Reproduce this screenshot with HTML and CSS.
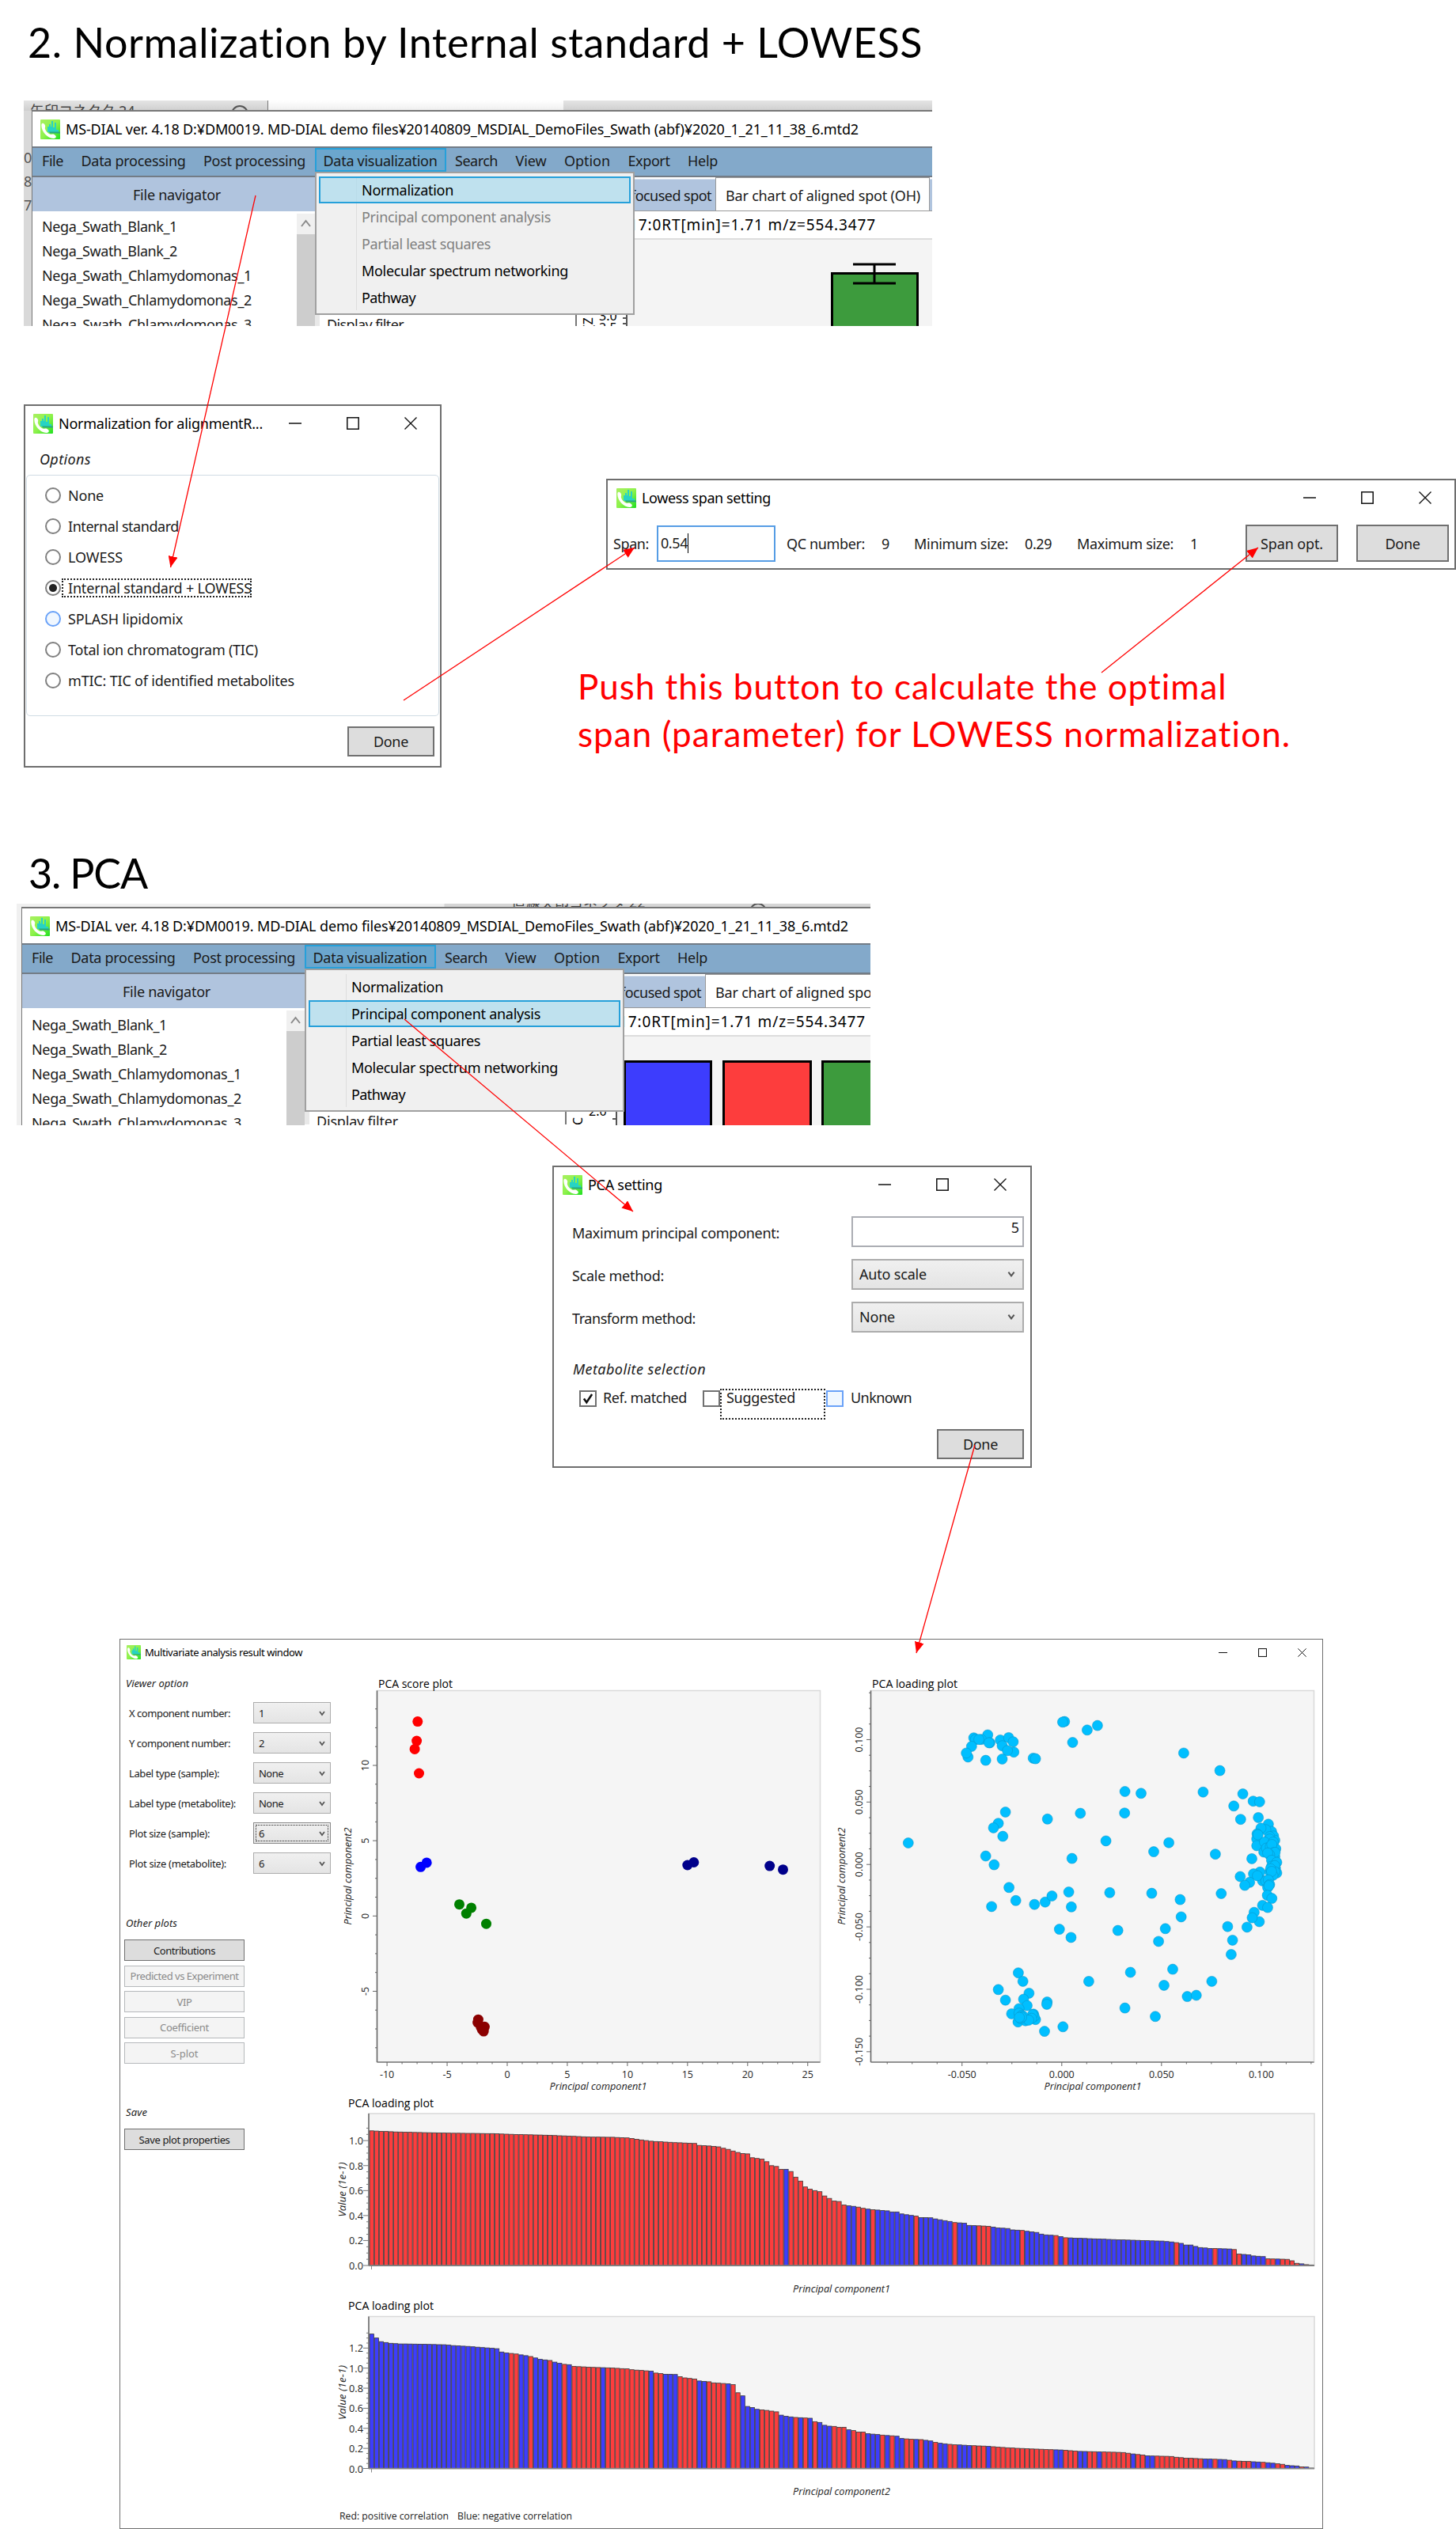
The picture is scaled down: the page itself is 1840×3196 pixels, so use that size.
FILE: index.html
```html
<!DOCTYPE html>
<html lang="en">
<head>
<meta charset="utf-8">
<title>MS-DIAL: normalization and PCA</title>
<link rel="stylesheet" href="styles.css">
</head>
<body>
<svg class="defs" aria-hidden="true">
  <defs>
    <linearGradient id="leaf" x1="0" y1="0" x2="1" y2="1"><stop offset="0" stop-color="#a8f060"/><stop offset=".5" stop-color="#8ff24c"/><stop offset="1" stop-color="#1fe01f"/></linearGradient>
    <symbol id="logo" viewBox="0 0 25 25">
      <rect width="25" height="25" rx="1" fill="url(#leaf)"/>
      <path d="M9 15V9h2v-3h2V9h1V2h2v8h2V4h2v9h3v3H9z" fill="#27d3c4"/>
      <path d="M11 15.500h14v2H12z" fill="#2aa77c"/>
      <path d="M1.500 6C2 4 5 4 6 7.500c.6 2-.6 2.800 0 4.500 1 3 3.500 5.500 6 6.500 2 .8 3-.8 5.500.5 3 1.600 3 4 .5 4.800C10 25.500 0 14.500 1.500 6z" fill="#fff"/>
    </symbol>
    <symbol id="min" viewBox="0 0 16 16"><path d="M0 8h16" stroke="#111" stroke-width="1.500"/></symbol>
    <symbol id="max" viewBox="0 0 16 16"><rect x=".8" y=".8" width="14.400" height="14.400" fill="none" stroke="#111" stroke-width="1.500"/></symbol>
    <symbol id="close" viewBox="0 0 16 16"><path d="M.5.5l15 15M15.500.5l-15 15" stroke="#111" stroke-width="1.400"/></symbol>
    <symbol id="chev" viewBox="0 0 10 10"><path d="M2 3l3 4 3-4" fill="none" stroke="#555" stroke-width="1.700"/></symbol>
    <marker id="head" viewBox="0 0 14 12" refX="14" refY="6" markerWidth="14" markerHeight="12" markerUnits="userSpaceOnUse" orient="auto"><path d="M0 0L14 6 0 12z" fill="#f00"/></marker>
  </defs>
</svg>

<main class="slide">
  <h1 class="heading heading-norm"><span data-w="1132">2. Normalization by Internal standard + LOWESS</span></h1>

  <section class="shot shot-norm">
    <div class="strip"><span class="strip-text strip-jp">矢印コネクタ 24</span><i class="pane"></i><svg class="eye" viewBox="0 0 24 24"><circle cx="12" cy="12" r="10"/><circle cx="12" cy="12" r="4"/></svg></div>
    <div class="edge"><span>0</span><span>8</span><span>7</span></div>
    <div class="app">
      <header class="app-title"><svg class="icon"><use href="#logo"/></svg><span data-w="1002">MS-DIAL ver. 4.18 D:¥DM0019. MD-DIAL demo files¥20140809_MSDIAL_DemoFiles_Swath (abf)¥2020_1_21_11_38_6.mtd2</span></header>
      <nav class="menubar"><span data-w="27">File</span><span data-w="132">Data processing</span><span data-w="129">Post processing</span><b class="open"><span data-w="144">Data visualization</span></b><span data-w="54">Search</span><span data-w="39">View</span><span data-w="58">Option</span><span data-w="53">Export</span><span data-w="38">Help</span></nav>
      <div class="app-body">
        <div class="navigator">
          <div class="nav-head"><span data-w="111">File navigator</span></div>
          <div class="nav-list">
            <ul><li><span data-w="171">Nega_Swath_Blank_1</span></li><li><span data-w="171">Nega_Swath_Blank_2</span></li><li><span data-w="265">Nega_Swath_Chlamydomonas_1</span></li><li><span data-w="265">Nega_Swath_Chlamydomonas_2</span></li><li><span data-w="265">Nega_Swath_Chlamydomonas_3</span></li></ul>
            <div class="scroll"><svg viewBox="0 0 23 26"><path d="M6 16l5.500-7 5.500 7" fill="none" stroke="#8a8a8a" stroke-width="2"/></svg></div>
          </div>
        </div>
        <div class="filter"><span data-w="97">Display filter</span></div>
        <div class="view">
          <div class="tabs"><span class="tab"><span data-w="102">focused spot</span></span><span class="tab active"><span data-w="246">Bar chart of aligned spot (OH)</span></span></div>
          <div class="info"><span data-w="312">17:0RT[min]=1.71 m/z=554.3477</span></div>
          <svg class="mini" viewBox="0 0 450 110">
            <rect x="63" width="387" height="110" fill="#f4f4f4"/>
            <path d="M63 80v30M58 92h5M58 99h5M58 106h5" stroke="#555" stroke-width="2"/>
            <text x="28" y="102">3.0</text><text x="28" y="117">2.5</text><text transform="translate(20 112) rotate(-90)">(Z</text>
            <path d="M322.500 112V42.500h108V112" fill="#3d9b3d" stroke="#000" stroke-width="3"/>
            <path d="M349 31h54M349 55h54M376 31v24" stroke="#000" stroke-width="3"/>
          </svg>
        </div>
      </div>
      <div class="popup"><span class="item hot"><span data-w="116">Normalization</span></span><span class="item off"><span data-w="239">Principal component analysis</span></span><span class="item off"><span data-w="163">Partial least squares</span></span><span class="item"><span data-w="261">Molecular spectrum networking</span></span><span class="item"><span data-w="68">Pathway</span></span></div>
    </div>
  </section>

  <section class="window win-norm">
    <header class="titlebar"><svg class="icon"><use href="#logo"/></svg><span data-w="258">Normalization for alignmentR...</span><svg class="ctl"><use href="#min"/></svg><svg class="ctl"><use href="#max"/></svg><svg class="ctl"><use href="#close"/></svg></header>
    <h2 class="legend"><span data-w="65">Options</span></h2>
    <div class="group">
      <label class="radio"><i></i><span data-w="45">None</span></label>
      <label class="radio"><i></i><span data-w="140">Internal standard</span></label>
      <label class="radio"><i></i><span data-w="69">LOWESS</span></label>
      <label class="radio checked"><i></i><b><span data-w="232">Internal standard + LOWESS</span></b></label>
      <label class="radio hover"><i></i><span data-w="145">SPLASH lipidomix</span></label>
      <label class="radio"><i></i><span data-w="240">Total ion chromatogram (TIC)</span></label>
      <label class="radio"><i></i><span data-w="286">mTIC: TIC of identified metabolites</span></label>
    </div>
    <div class="actions"><button class="btn"><span data-w="44">Done</span></button></div>
  </section>

  <section class="window win-span">
    <header class="titlebar"><svg class="icon"><use href="#logo"/></svg><span data-w="163">Lowess span setting</span><svg class="ctl"><use href="#min"/></svg><svg class="ctl"><use href="#max"/></svg><svg class="ctl"><use href="#close"/></svg></header>
    <div class="span-row">
      <span class="c1" data-w="45">Span:</span><span class="input"><span data-w="34">0.54</span></span><span class="c2" data-w="99">QC number:</span><span class="c3">9</span><span class="c4" data-w="119">Minimum size:</span><span class="c5" data-w="34">0.29</span><span class="c6" data-w="122">Maximum size:</span><span class="c7">1</span>
      <button class="btn b1"><span data-w="79">Span opt.</span></button><button class="btn b2"><span data-w="44">Done</span></button>
    </div>
  </section>

  <p class="note"><span data-w="820">Push this button to calculate the optimal</span><br><span data-w="902">span (parameter) for LOWESS normalization.</span></p>

  <h1 class="heading heading-pca"><span data-w="150">3. PCA</span></h1>

  <section class="shot shot-pca">
    <div class="strip"><span class="strip-text strip-jp">直線矢印コネクタ 22</span><svg class="eye" viewBox="0 0 24 24"><circle cx="12" cy="12" r="10"/><circle cx="12" cy="12" r="4"/></svg></div>
    <div class="app">
      <header class="app-title"><svg class="icon"><use href="#logo"/></svg><span data-w="1002">MS-DIAL ver. 4.18 D:¥DM0019. MD-DIAL demo files¥20140809_MSDIAL_DemoFiles_Swath (abf)¥2020_1_21_11_38_6.mtd2</span></header>
      <nav class="menubar"><span data-w="27">File</span><span data-w="132">Data processing</span><span data-w="129">Post processing</span><b class="open"><span data-w="144">Data visualization</span></b><span data-w="54">Search</span><span data-w="39">View</span><span data-w="58">Option</span><span data-w="53">Export</span><span data-w="38">Help</span></nav>
      <div class="app-body">
        <div class="navigator">
          <div class="nav-head"><span data-w="111">File navigator</span></div>
          <div class="nav-list">
            <ul><li><span data-w="171">Nega_Swath_Blank_1</span></li><li><span data-w="171">Nega_Swath_Blank_2</span></li><li><span data-w="265">Nega_Swath_Chlamydomonas_1</span></li><li><span data-w="265">Nega_Swath_Chlamydomonas_2</span></li><li><span data-w="265">Nega_Swath_Chlamydomonas_3</span></li></ul>
            <div class="scroll"><svg viewBox="0 0 23 26"><path d="M6 16l5.500-7 5.500 7" fill="none" stroke="#8a8a8a" stroke-width="2"/></svg></div>
          </div>
        </div>
        <div class="filter"><span data-w="103">Display filter</span></div>
        <div class="view">
          <div class="tabs"><span class="tab"><span data-w="102">focused spot</span></span><span class="tab active"><span data-w="246">Bar chart of aligned spot (OH)</span></span></div>
          <div class="info"><span data-w="312">17:0RT[min]=1.71 m/z=554.3477</span></div>
          <svg class="mini" viewBox="0 0 450 110">
            <rect x="63" width="387" height="120" fill="#f4f4f4"/>
            <path d="M63 80v40M58 92h5M58 104h5" stroke="#555" stroke-width="2"/>
            <text x="28" y="100">2.0</text><text transform="translate(20 122) rotate(-90)">RC</text>
            <path d="M73.500 120V31.500h109V120" fill="#3d3dfd" stroke="#000" stroke-width="3"/>
            <path d="M198.500 120V31.500h110V120" fill="#fd3d3d" stroke="#000" stroke-width="3"/>
            <path d="M323.500 120V31.500h110V120" fill="#3d9b3d" stroke="#000" stroke-width="3"/>
          </svg>
        </div>
      </div>
      <div class="popup"><span class="item"><span data-w="116">Normalization</span></span><span class="item hot"><span data-w="239">Principal component analysis</span></span><span class="item"><span data-w="163">Partial least squares</span></span><span class="item"><span data-w="261">Molecular spectrum networking</span></span><span class="item"><span data-w="68">Pathway</span></span></div>
    </div>
  </section>

  <section class="window win-pca">
    <header class="titlebar"><svg class="icon"><use href="#logo"/></svg><span data-w="94">PCA setting</span><svg class="ctl"><use href="#min"/></svg><svg class="ctl"><use href="#max"/></svg><svg class="ctl"><use href="#close"/></svg></header>
    <div class="form">
      <div class="field"><span data-w="262">Maximum principal component:</span><span class="input num">5</span></div>
      <div class="field"><span data-w="116">Scale method:</span><span class="combo"><span data-w="85">Auto scale</span><svg><use href="#chev"/></svg></span></div>
      <div class="field"><span data-w="156">Transform method:</span><span class="combo"><span data-w="45">None</span><svg><use href="#chev"/></svg></span></div>
    </div>
    <h2 class="legend"><span data-w="168">Metabolite selection</span></h2>
    <div class="checks">
      <i class="box"><svg viewBox="0 0 20 20"><path d="M4 10l4 5.500 8-12" fill="none" stroke="#111" stroke-width="3"/></svg></i><span class="k1" data-w="106">Ref. matched</span>
      <i class="box"></i><span class="focus"><span data-w="87">Suggested</span></span><i class="box hover"></i><span class="k3" data-w="77">Unknown</span>
    </div>
    <div class="actions"><button class="btn"><span data-w="44">Done</span></button></div>
  </section>

  <section class="window win-result">
    <header class="titlebar"><svg class="icon"><use href="#logo"/></svg><span data-w="199">Multivariate analysis result window</span><svg class="ctl"><use href="#min"/></svg><svg class="ctl"><use href="#max"/></svg><svg class="ctl"><use href="#close"/></svg></header>
    <div class="result">
      <aside class="options">
        <h2><span data-w="79">Viewer option</span></h2>
        <div class="fields">
          <div class="field"><span data-w="128">X component number:</span><span class="combo">1<svg><use href="#chev"/></svg></span></div>
          <div class="field"><span data-w="128">Y component number:</span><span class="combo">2<svg><use href="#chev"/></svg></span></div>
          <div class="field"><span data-w="114">Label type (sample):</span><span class="combo"><span data-w="31">None</span><svg><use href="#chev"/></svg></span></div>
          <div class="field"><span data-w="135">Label type (metabolite):</span><span class="combo"><span data-w="31">None</span><svg><use href="#chev"/></svg></span></div>
          <div class="field"><span data-w="102">Plot size (sample):</span><span class="combo dotted">6<svg><use href="#chev"/></svg></span></div>
          <div class="field"><span data-w="123">Plot size (metabolite):</span><span class="combo">6<svg><use href="#chev"/></svg></span></div>
        </div>
        <h2 class="h-plots"><span data-w="65">Other plots</span></h2>
        <div class="stack">
          <button class="btn"><span data-w="78">Contributions</span></button>
          <button class="btn" disabled><span data-w="137">Predicted vs Experiment</span></button>
          <button class="btn" disabled><span data-w="19">VIP</span></button>
          <button class="btn" disabled><span data-w="62">Coefficient</span></button>
          <button class="btn" disabled><span data-w="35">S-plot</span></button>
        </div>
        <h2 class="h-save"><span data-w="27">Save</span></h2>
        <button class="btn"><span data-w="115">Save plot properties</span></button>
      </aside>
      <svg class="charts" id="charts" viewBox="420 2108 1250 1084"></svg>
    </div>
  </section>

  <svg class="arrows" viewBox="0 0 1840 3196">
    <g stroke="#f00" stroke-width="1.300">
      <path d="M323 247L215.500 717" marker-end="url(#head)"/>
      <path d="M510 885L802 692" marker-end="url(#head)"/>
      <path d="M1392 850L1590 692" marker-end="url(#head)"/>
      <path d="M511 1288L800 1531" marker-end="url(#head)"/>
      <path d="M1232 1826L1158 2089" marker-end="url(#head)"/>
    </g>
  </svg>
</main>
<script src="charts.js"></script>
</body>
</html>
```
FILE: styles.css
```css
* { box-sizing: border-box; }
body { margin: 0; background: #fff; color: #1a1a1a; font: 18px/20px "Noto Sans", "Open Sans", "Noto Sans CJK JP", sans-serif; }
h1, h2, p, ul { margin: 0; padding: 0; font-weight: 400; }
li { list-style: none; }
b { font-weight: 400; }
i { font-style: normal; }
[data-w] { display: inline-block; white-space: pre; flex: none; }
.defs { position: absolute; width: 0; height: 0; }
.slide { position: relative; width: 1840px; height: 3196px; overflow: hidden; }

.heading { position: absolute; font: 52px/64px Lato, sans-serif; color: #000; white-space: nowrap; }
.heading-norm { left: 35px; top: 21px; }
.heading-pca { left: 36px; top: 1071px; }
.note { position: absolute; left: 730px; top: 837px; font: 44px/60px Lato, sans-serif; color: #f00; white-space: nowrap; }
.arrows { position: absolute; left: 0; top: 0; width: 1840px; height: 3196px; fill: none; }

/* main application captures */
.shot { position: absolute; overflow: hidden; background: #d9d9d9; }
.shot-norm { left: 30px; top: 127px; width: 1148px; height: 285px; padding: 12px 0 0 10px; }
.shot-pca { left: 21px; top: 1142px; width: 1079px; height: 280px; padding: 4px 0 0 6px; background: #f0f0f0; }
.shot-pca .app { height: 276px; }
.strip { position: absolute; left: 0; top: 0; width: 100%; height: 13px; overflow: hidden; background: linear-gradient(#e4e4e4, #cfcfcf); }
.shot-pca .strip { background: linear-gradient(90deg, #f0f0f0 540px, #d6d6d6 541px); }
.strip-jp { position: absolute; left: 8px; top: 3px; letter-spacing: 0; color: #444; white-space: nowrap; }
.shot-pca .strip-jp { left: 626px; top: -12px; }
.pane { position: absolute; left: 308px; top: 0; width: 374px; height: 13px; background: linear-gradient(#fff, #eee); border-left: 1px solid #777; }
.eye { position: absolute; left: 261px; top: 5px; width: 24px; height: 24px; fill: none; stroke: #555; stroke-width: 2; }
.shot-pca .eye { left: 925px; top: -2px; }
.edge { position: absolute; left: 0; top: 62px; display: flex; flex-direction: column; gap: 10px; color: #555; }
.app { position: relative; width: 1150px; height: 273px; background: #fff; border-top: 2px solid #777; border-left: 1px solid #777; overflow: hidden; }
.icon { width: 25px; height: 25px; flex: none; }
.app-title { display: flex; align-items: center; gap: 7px; height: 44px; padding: 0 0 0 10px; color: #000; }
.menubar { display: flex; align-items: flex-start; gap: 22.500px; height: 39px; padding-left: 12px; background: #83a9ca; border-top: 2px solid #737c86; border-bottom: 2px solid #737c86; line-height: 32px; }
.menubar .open { height: 30px; margin: 0 -11px; padding: 0 9px; background: #6ba6cd; border: 2px solid #26a0da; line-height: 28px; }
.app-body { display: flex; height: 190px; }
.navigator { width: 357px; flex: none; }
.nav-head { height: 43px; background: #b0c4de; text-align: center; line-height: 44px; padding-left: 8px; }
.nav-list { display: flex; justify-content: space-between; padding: 3px 0 0 12px; }
.nav-list ul { padding-top: 1px; }
.shot-pca .nav-list ul { padding-top: 3px; }
.nav-list li { height: 31px; line-height: 30px; }
.scroll { width: 23px; height: 150px; background: #cdcdcd; }
.scroll svg { display: block; width: 23px; height: 26px; background: #f0f0f0; }
.filter { width: 331px; flex: none; border-left: 6px solid #e8e8e8; border-right: 2px solid #777; padding: 176px 0 0 9px; }
.view { width: 450px; flex: none; }
.tabs { display: flex; height: 43px; border-bottom: 1px solid #999; background: linear-gradient(#fff 2px, #b0c4de 3px); }
.tab { width: 175px; padding-right: 5px; text-align: right; line-height: 46px; }
.tab.active { width: 271px; padding: 0 0 0 12px; text-align: left; line-height: 44px; background: #fff; border: 1px solid #999; border-bottom: 0; }
.info { height: 36px; padding-left: 66px; font-size: 19px; line-height: 34px; color: #000; border-bottom: 2px solid #ddd; }
.mini { display: block; width: 450px; height: 110px; overflow: visible; font-size: 16px; }
.popup { position: absolute; left: 357px; top: 76px; width: 404px; height: 181px; padding: 4px 3px; display: flex; flex-direction: column; background: linear-gradient(#ddd, #ddd) 50px 5px / 1px 168px no-repeat #f0f0f0; border: 2px solid #a0a0a0; color: #000; }
.item { height: 34.300px; padding-left: 52px; border: 2px solid transparent; line-height: 30px; }
.item.hot { background: rgba(170, 218, 236, .7); border-color: #26a0da; }
.item.off { color: #808080; }

/* dialogs */
.window { position: absolute; background: #fff; border: 2px solid #6e6e6e; }
.titlebar { display: flex; align-items: center; gap: 7px; color: #000; }
.titlebar span { margin-right: auto; }
.ctl { width: 16px; height: 16px; flex: none; margin-left: 50px; }
.btn { display: block; margin: 0; padding: 0; font: inherit; color: #1a1a1a; background: #ddd; border: 2px solid #707070; border-radius: 0; text-align: center; }
.btn:disabled { background: #f4f4f4; border-color: #b5b8bb; color: #8a8a8a; }
.legend { font-size: 18px; font-style: italic; }
.actions { display: flex; justify-content: flex-end; }
.input { background: #fff; border: 2px solid #abadb3; }
.combo { display: flex; align-items: center; justify-content: space-between; background: linear-gradient(#f0f0f0, #e4e4e4); border: 2px solid #acacac; }

.win-norm { left: 30px; top: 511px; width: 528px; height: 459px; }
.win-norm .titlebar { height: 44px; padding: 0 29px 0 10px; }
.titlebar span + .ctl { margin-left: 0; }
.win-norm .legend { padding: 13px 0 0 18px; height: 43px; }
.group { height: 305px; margin: 0 1px; padding: 5px 0 0 22px; border: 1px solid #d0dce4; border-radius: 5px; }
.radio { display: flex; align-items: center; height: 39px; gap: 9px; }
.radio i { width: 20px; height: 20px; margin-left: 1px; border: 2px solid #808080; border-radius: 50%; }
.radio b { margin-left: -8px; padding-left: 6px; border: 2px dotted #222; height: 24px; line-height: 20px; }
.radio b span { margin-right: -2px; }
.radio.checked i { background: radial-gradient(circle, #222 4.500px, #fff 5.500px); }
.radio.hover i { border-color: #6aa2f8; background: #f0f7ff; }
.win-norm .actions { padding: 13px 7px 0 0; }
.win-norm .btn, .win-pca .btn { width: 110px; height: 38px; }

.win-span { left: 766px; top: 605px; width: 1074px; height: 115px; }
.win-span .titlebar { height: 44px; padding: 0 29px 0 11px; }
.span-row { display: flex; align-items: center; height: 66px; padding: 7px 0 2px 7px; }
.span-row > span { padding-top: 1px; }
.span-row .input { width: 150px; height: 46px; margin: 0 14px 0 10px; padding: 0 0 0 3px; border-color: #569de5; line-height: 40px; }
.span-row .input span { border-right: 1px solid #000; height: 25px; line-height: 25px; }
.c3 { margin: 0 31px 0 21px; width: 10px; }
.c5 { margin: 0 32px 0 21px; }
.c7 { margin: 0 60px 0 21px; width: 10px; }
.span-row .btn { width: 117px; height: 47px; flex: none; }
.span-row .b1 { margin-right: 23px; }

.win-pca { left: 698px; top: 1473px; width: 606px; height: 382px; }
.win-pca .titlebar { height: 44px; padding: 0 30px 0 11px; }
.form { padding: 18px 8px 0 23px; display: flex; flex-direction: column; gap: 15px; }
.form .field { display: flex; justify-content: space-between; align-items: center; height: 39px; }
.form .field > :first-child { padding-top: 3px; }
.form .input, .form .combo { width: 218px; height: 39px; }
.form .num { text-align: right; padding: 2px 4px; }
.form .combo { padding: 0 8px 2px; }
.form .combo svg { width: 12px; height: 12px; }
.win-pca .legend { padding: 36px 0 0 24px; }
.checks { display: flex; height: 40px; margin-top: 15px; padding-left: 32px; }
.box { width: 22px; height: 21px; margin-top: 2px; border: 2px solid #707070; background: #fff; flex: none; }
.box svg { display: block; width: 18px; height: 17px; }
.box.hover { border-color: #6aa2f8; background: #f0f7ff; }
.k1 { margin: 1px 20px 0 8px; }
.k3 { margin: 1px 0 0 9px; }
.focus { width: 133px; height: 39px; padding-left: 6px; border: 2px dotted #222; line-height: 18px; flex: none; margin-right: 1px; }
.win-pca .actions { padding: 11px 8px 0 0; }

.win-result { left: 151px; top: 2071px; width: 1521px; height: 1125px; border-width: 1px; font-size: 13px; line-height: 16px; }
.win-result .titlebar { height: 32px; gap: 5px; padding: 0 20px 0 8px; }
.win-result .icon { width: 18px; height: 18px; }
.win-result .ctl { width: 11px; height: 11px; margin-left: 34px; }
.win-result .titlebar span + .ctl { margin-left: 0; }
.result { display: flex; }
.options { width: 266px; flex: none; padding: 15px 0 0 5px; }
.options h2 { padding-left: 2px; font-size: 13px; font-style: italic; }
.options .fields { padding: 16px 0 0 6px; display: flex; flex-direction: column; gap: 11px; }
.options .field { display: flex; justify-content: space-between; align-items: center; height: 27px; }
.options .combo { width: 98px; height: 27px; border-width: 1px; padding: 0 5px 0 6px; }
.options .combo svg { width: 10px; height: 10px; }
.options .combo.dotted { outline: 1px dotted #222; outline-offset: -4px; border-color: #888; }
.h-plots { margin-top: 54px; }
.stack { display: flex; flex-direction: column; gap: 5.500px; padding-top: 13px; }
.options .btn { width: 152px; height: 27px; border-width: 1px; }
.h-save { margin: 53px 0 13px; }
.charts { display: block; width: 1250px; height: 1084px; margin: 4px 0 0 2px; font-family: "Open Sans", sans-serif; }
```
FILE: charts.js
```javascript
// Set each label to its nominal width by spacing its letters.
document.querySelectorAll('[data-w]').forEach(function (el) {
  var range = document.createRange();
  range.selectNodeContents(el);
  var natural = range.getBoundingClientRect().width;
  el.style.letterSpacing = ((+el.dataset.w - natural) / el.textContent.length).toFixed(3) + 'px';
});

var svg = document.getElementById('charts');
var out = [];
function text(x, y, s, o) {
  o = o || {};
  var rot = o.rot ? ' transform="rotate(-90 ' + x + ' ' + y + ')"' : '';
  out.push('<text x="' + x + '" y="' + y + '" font-size="' + (o.size || 13) + '" fill="' + (o.fill || '#222') + '"' +
    (o.it ? ' font-style="italic"' : '') + (o.len ? ' textLength="' + o.len + '" lengthAdjust="spacingAndGlyphs"' : '') +
    ' text-anchor="' + (o.anchor || 'middle') + '"' + rot + '>' + s + '</text>');
}
function line(x1, y1, x2, y2, c, w) {
  out.push('<path d="M' + x1 + ' ' + y1 + 'L' + x2 + ' ' + y2 + '" stroke="' + c + '" stroke-width="' + (w || 1) + '"/>');
}
function plot(x, y, r, b) {
  out.push('<rect x="' + x + '" y="' + y + '" width="' + (r - x) + '" height="' + (b - y) + '" fill="#f5f5f5" stroke="#d9d9d9" stroke-width="1.5"/>');
  line(x, y, x, b, '#666', 1.5);
  line(x, b, r, b, '#777', 1.5);
}
function dots(list, color, sx, sy, ox, oy, stroke) {
  for (var i = 0; i < list.length; i += 2) {
    out.push('<circle cx="' + (ox + list[i] / sx).toFixed(1) + '" cy="' + (oy + list[i + 1] / sy).toFixed(1) + '" r="6.500" fill="' + color + '" stroke="' + stroke + '" stroke-width=".5"/>');
  }
}

// Score plot
plot(476.5, 2136.5, 1036.5, 2606);
text(478, 2133, 'PCA score plot', { anchor: 'start', size: 14, len: 94, fill: '#000' });
for (var v = -10; v <= 25; v += 5) {
  var x = 641 + v * 15.19;
  line(x, 2606, x, 2611, '#666');
  text(x, 2625.5, v, { size: 12.5 });
  for (var m = 1; m < 4 && v < 25; m++) line(x + m * 18.99, 2606, x + m * 18.99, 2608.5, '#666');
}
for (v = -8.75; v <= 13.75; v += 1.25) {
  var y = 2421.3 - v * 19.03;
  line(v % 5 ? 474 : 471, y, 476, y, '#666');
  if (v % 5 === 0) text(466, y, v, { rot: 1, size: 12.5 });
}
text(756, 2641, 'Principal component1', { it: 1, size: 13, len: 123 });
text(444, 2371, 'Principal component2', { it: 1, rot: 1, size: 13, len: 123 });
var S = [2.376, 2.613, 410, 2060];
function score(l, c) { dots(l, c, S[0], S[1], S[2], S[3], 'none'); }
score([280, 302, 277, 366, 271, 393, 284, 473], '#ff0000');
score([307, 768, 289, 782], '#0000ff');
score([405, 906, 441, 917, 426, 936, 486, 970], '#008000');
score([460, 1296, 462, 1286, 470, 1312, 481, 1310, 474, 1320, 478, 1325], '#8b0000');
score([1109, 767, 1090, 776, 1337, 779, 1377, 791], '#00008b');

// Loading scatter
plot(1100.5, 2136.5, 1660.5, 2606);
text(1102, 2133, 'PCA loading plot', { anchor: 'start', size: 14, len: 108, fill: '#000' });
for (v = -7; v <= 10; v++) {
  x = 1341.8 + v * 31.51;
  line(x, 2606, x, v % 4 ? 2608.5 : 2611, '#666');
  if (v % 4 === 0) text(x, 2625.5, (v * 0.0125).toFixed(3), { size: 12.5 });
}
for (v = -12; v <= 11; v++) {
  y = 2356.2 - v * 19.72;
  line(v % 4 ? 1098 : 1095, y, 1100, y, '#666');
  if (v % 4 === 0) text(1090, y, (v * 0.0125).toFixed(3), { rot: 1, size: 12.5 });
}
text(1381, 2641, 'Principal component1', { it: 1, size: 13, len: 123 });
text(1068, 2371, 'Principal component2', { it: 1, rot: 1, size: 13, len: 123 });
dots([699,302,693,304,801,315,769,330,724,371, 461,346,418,356,423,361,441,361,434,361,411,384,400,419,395,406,455,430,468,372,465,372,500,363,526,355,540,369,506,382,542,403,522,398,506,426,602,423,609,425,
  1068,406,1180,464,886,533,936,539,1128,535,1251,541,1283,565,1303,567,1223,581,1244,625,1299,619,
  516,601,494,638,479,653,508,681,646,624,748,605,885,604,215,703,455,746,481,775,722,754,827,696,1022,702,975,732,1166,740,1279,755,
  527,850,548,893,473,913,606,906,639,898,660,878,712,865,720,914,839,867,969,869,1057,890,1060,947,1184,870,683,988,719,1015,864,992,1011,986,990,1028,1204,979,1219,1024,1215,1071,
  556,1132,570,1160,494,1187,589,1199,572,1219,516,1222,583,1240,645,1228,644,1236,558,1250,535,1267,558,1265,555,1294,578,1290,609,1286,603,1268,605,1276,600,1270,597,1282,567,1272,571,1276,588,1288,563,1283,566,1278,559,1279,637,1325,694,1310,
  774,1160,903,1130,1034,1120,1007,1173,1155,1160,1079,1210,1107,1206,886,1248,980,1276,
  1330,641,1340,665,1322,659,1307,654,1295,673,1294,690,1298,676,1294,712,1346,680,1350,694,1334,682,1330,700,1334,690,1318,700,1316,733,1324,720,1336,715,1353,722,1345,700,1341,708,1350,748,1346,735,1351,734,1334,742,1328,736,
  1340,760,1356,767,1340,780,1352,786,1350,778,1356,802,1350,798,1344,810,1335,798,1337,788,1340,797,1304,799,1284,805,1312,828,1322,828,1296,811,1243,814,1272,833,1257,843,1330,825,1328,850,1334,840,1332,844,
  1327,876,1341,886,1312,909,1328,916,1286,932,1302,963,1280,950,1264,981], '#00bfff', 2.45, 2.613, 1060, 2060, '#0b8fc0');

// Ordered loading bars; heights are given at knots, linear in between.
function bars(top, base, unit, max, step, knots, isRed, zero, axis, title, name) {
  plot(466, top, 1661, base);
  text(440, title, 'PCA loading plot', { anchor: 'start', size: 14, len: 108, fill: '#000' });
  for (var t = 0; t * 0.05 < max; t++) {
    var y = base - t * 0.05 * unit;
    line(t % 4 ? 463 : 459, y, 466, y, '#777');
    if (t % 4 === 0) text(459, y + 5, (t * 0.05).toFixed(1), { anchor: 'end', size: 13, len: 18 });
  }
  line(469.5, base, 469.5, base + 5, '#888');
  var k = 0;
  for (var i = 0; i < 196; i++) {
    while (k + 2 < knots.length - 2 && knots[k + 2] <= i) k += 2;
    var f = (i - knots[k]) / (knots[k + 2] - knots[k]);
    var h = (zero - (knots[k + 1] + (knots[k + 3] - knots[k + 1]) * f)) / 2.82;
    out.push('<rect x="' + (467.1 + i * 6.09).toFixed(2) + '" y="' + (base - h).toFixed(1) + '" width="5.3" height="' + Math.max(h, 0.5).toFixed(1) + '" fill="' + (isRed(i) ? '#fd3d3d' : '#3d3dfd') + '" stroke="#3a3a3a" stroke-width=".8"/>');
  }
  line(466, base, 1661, base, '#888', 1.5);
  text(1063.5, axis, name, { it: 1, size: 13, len: 123 });
  text(437, top + 96, 'Value (1e-1)', { it: 1, rot: 1, size: 13, len: 69 });
}
function set(s) {
  var r = {};
  s.split(',').forEach(function (p) { var q = p.split('-'); for (var i = +q[0]; i <= +(q[1] || q[0]); i++) r[i] = 1; });
  return function (i) { return r[i]; };
}
bars(2671, 2863, 157.8, 1.13, 0.2, [0,149,5,153,10,155,15,157,20,158,25,159,30,162,35,164,40,167,45,171,50,172,53,174,55,179,58,186,60,188,63,191,67,194,68,201,70,203,72,206,73,211,74,215,75,221,76,226,77,230,78,231,79,245,81,250,82,259,83,273,84,276,85,286,86,286,87,294,88,314,89,328,90,349,91,357,92,362,93,366,94,381,95,390,96,399,97,401,98,413,99,416,100,418,101,421,102,425,103,428,104,430,107,434,108,438,109,438,110,445,111,448,113,453,114,458,116,459,117,463,120,472,121,476,123,478,124,486,128,489,129,492,130,495,132,497,133,502,135,504,136,507,138,511,139,517,140,520,142,522,143,526,144,530,147,532,150,534,155,537,160,540,164,542,166,545,168,550,169,556,170,556,171,561,172,565,174,568,178,570,179,572,180,588,182,591,183,595,185,597,186,605,190,607,191,612,192,621,193,623,194,626,195,627],
  set('0-85,87-98,101,102,104,113,121,126-128,135,142,144,167,175,179,180,186,187,189-192,194,195'), 629, 2897, 2663, 'Principal component1');
bars(2927.5, 3119.5, 126.8, 1.37, 0.2, [0,873,1,887,2,900,3,903,4,906,6,908,10,909,15,911,17,914,20,917,23,921,26,925,27,937,28,940,30,944,33,953,34,958,35,963,37,967,38,973,39,977,40,981,41,982,42,988,45,991,50,994,53,997,54,1000,57,1004,58,1005,59,1012,61,1016,63,1017,64,1025,65,1029,67,1033,68,1040,70,1043,71,1047,74,1050,75,1053,76,1082,77,1093,78,1131,79,1135,80,1141,82,1145,84,1150,85,1162,86,1166,88,1170,91,1173,92,1185,93,1188,94,1198,95,1201,96,1202,97,1205,98,1205,99,1214,100,1217,101,1222,102,1222,103,1228,105,1231,106,1233,109,1237,110,1245,112,1248,114,1249,116,1254,117,1259,118,1262,120,1266,124,1270,128,1273,130,1276,134,1280,138,1283,143,1286,147,1291,152,1293,156,1295,158,1300,160,1304,161,1307,166,1309,167,1312,169,1315,173,1318,177,1320,179,1325,182,1327,185,1330,187,1333,189,1337,190,1341,192,1343,193,1346,194,1347,195,1351],
  set('29,30,33,37,40,42-47,49-57,59,60,64-67,70-73,75,76,81-84,88,90,92,96-98,100-102,106,108,111,112,114,117,120,121,125-127,129-141,144-146,149,150,152-157,159,160,163-172,175,178,180-182,185,188,189,193'), 1352, 3153, 2919, 'Principal component2');
text(429, 3184, 'Red: positive correlation', { anchor: 'start', size: 13, len: 138 });
text(578, 3184, 'Blue: negative correlation', { anchor: 'start', size: 13, len: 145 });
svg.innerHTML = out.join('');
```
